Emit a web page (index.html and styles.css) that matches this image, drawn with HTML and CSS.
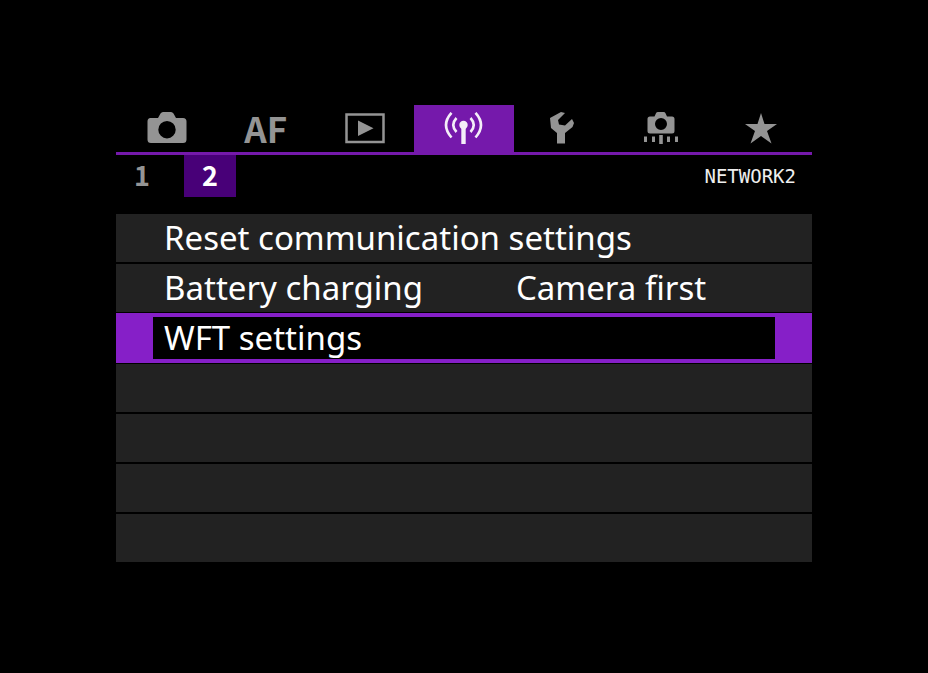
FILE: index.html
```html
<!DOCTYPE html>
<html lang="en">
<head>
  <meta charset="UTF-8">
  <meta name="viewport" content="width=device-width, initial-scale=1.0">
  <title>Network settings</title>
  <link rel="stylesheet" href="styles.css">
</head>
<body>

  <main class="menu">
    <nav class="tabs">
      <button type="button" class="tab" aria-label="Shooting">
        <svg width="40" height="32" viewBox="0 0 40 32" fill="currentColor" fill-rule="evenodd">
          <path d="M3.500 6H11L13.500 1.500Q14.500 0 16 0H24Q25.500 0 26.500 1.500L29 6H36Q39.500 6 39.500 9.500V27.500Q39.500 31 36 31H4Q0.500 31 0.500 27.500V9.500Q0.500 6 3.500 6ZM20 9A8.700 8.700 0 1 0 20 26.400A8.700 8.700 0 1 0 20 9Z"/>
        </svg>
      </button>
      <button type="button" class="tab tab-text">AF</button>
      <button type="button" class="tab" aria-label="Playback">
        <svg width="40" height="32" viewBox="0 0 40 32">
          <rect x="1.500" y="2.500" width="37" height="27.500" fill="none" stroke="currentColor" stroke-width="2.500"/>
          <path d="M13 8.500L28.500 16.200L13 24Z" fill="currentColor"/>
        </svg>
      </button>
      <button type="button" class="tab active" aria-label="Network">
        <svg width="40" height="32" viewBox="0 0 40 32" fill="none" stroke="currentColor" stroke-width="2.600">
          <path d="M7.500 0.800Q-3.500 13 7.500 25.500M12.500 6Q6 13 12.500 20M26.500 6Q33 13 26.500 20M31.500 0.800Q42.500 13 31.500 25.500"/>
          <circle cx="19.500" cy="13" r="4.200" fill="currentColor" stroke="none"/>
          <path d="M19.500 14V32" stroke-width="4.400"/>
        </svg>
      </button>
      <button type="button" class="tab" aria-label="Set-up">
        <svg width="26" height="32" viewBox="0 0 26 32" fill="currentColor">
          <path d="M0 6L11 0L15 1L8 8L9 12.500L15 13.500L22 7L24 11L22.500 15L15 21V31.500H7V21L1 16Z"/>
        </svg>
      </button>
      <button type="button" class="tab" aria-label="Custom functions">
        <svg width="36" height="32" viewBox="0 0 36 32" fill="currentColor" fill-rule="evenodd">
          <path d="M6 4.500H10.500L12 1.200Q12.500 0 14 0H19.500Q21 0 21.500 1.200L23 4.500H28Q30.500 4.500 30.500 7V19Q30.500 21.500 28 21.500H6Q3.500 21.500 3.500 19V7Q3.500 4.500 6 4.500ZM17 6A6 6 0 1 0 17 18A6 6 0 1 0 17 6Z"/>
          <path d="M0 24.500H3V30H0ZM8 24.500H11V30H8ZM15.200 23H18.800V32H15.200ZM23 24.500H26V30H23ZM31 24.500H34V30H31Z"/>
        </svg>
      </button>
      <button type="button" class="tab" aria-label="My Menu">
        <svg width="32" height="32" viewBox="0 0 32 32" fill="currentColor">
          <path d="M16 1L19.500 12H32L22 19L26.500 31.500L16 24L5.500 31.500L10 19L0 12H12.500Z"/>
        </svg>
      </button>
    </nav>

    <div class="pages">
      <button type="button" class="page">1</button>
      <button type="button" class="page active">2</button>
      <span class="page-title">NETWORK2</span>
    </div>

    <ul class="items">
      <li class="item"><button type="button" class="item-button">Reset communication settings</button></li>
      <li class="item">
        <button type="button" class="item-button">
          <span class="item-name">Battery charging</span>
          <span class="item-value">Camera first</span>
        </button>
      </li>
      <li class="item selected"><button type="button" class="item-button">WFT settings</button></li>
      <li class="item"></li>
      <li class="item"></li>
      <li class="item"></li>
      <li class="item"></li>
    </ul>
  </main>

</body>
</html>
```
FILE: styles.css
```css
body {
  font-family: "Noto Sans", sans-serif;
  background-color: #000;
  color: #fff;
  margin: 0;
  padding: 105px 12.5%;
}

button {
  background: none;
  border: none;
  margin: 0;
  padding: 0;
  color: inherit;
  font: inherit;
  cursor: pointer;
}

.tabs {
  display: grid;
  grid-template-columns: repeat(7, 1fr);
  padding: 0 1px;
  border-bottom: 3px solid #7519ab;
}

.tab {
  display: flex;
  justify-content: center;
  align-items: center;
  height: 47px;
  padding-bottom: 2px;
  color: #949494;
}

.tab.active {
  background-color: #7519ab;
  color: #f4eef8;
}

.tab-text {
  font-family: "Noto Sans CJK JP", sans-serif;
  font-size: 35px;
  font-weight: bold;
  line-height: 44px;
}

.pages {
  display: flex;
  align-items: center;
  gap: 16px;
  margin-bottom: 17px;
}

.page {
  width: 52px;
  height: 42px;
  padding-bottom: 2px;
  font-family: "Noto Sans CJK JP", sans-serif;
  font-size: 27px;
  font-weight: bold;
  line-height: 40px;
  color: #949494;
}

.page.active {
  background-color: #480078;
  color: #fff;
}

.page-title {
  margin-left: auto;
  padding-right: 16px;
  font-family: "DejaVu Sans Mono", monospace;
  font-size: 19px;
  color: #eee;
}

.items {
  display: grid;
  gap: 2px;
  list-style: none;
  margin: 0;
  padding: 0;
}

.item {
  height: 48px;
  background-color: #222;
}

.item-button {
  display: flex;
  align-items: center;
  box-sizing: border-box;
  width: 100%;
  height: 100%;
  padding: 0 48px;
  font-size: 33px;
  line-height: 48px;
  white-space: nowrap;
}

.item-name {
  flex: 352;
  text-align: left;
}

.item-value {
  flex: 248;
  text-align: left;
}

.item.selected {
  box-sizing: border-box;
  height: 50px;
  margin: -1px 0;
  padding: 4px 37px;
  background-color: #861fc8;
}

.selected .item-button {
  padding: 0 11px;
  background-color: #000;
  line-height: 42px;
}
```
